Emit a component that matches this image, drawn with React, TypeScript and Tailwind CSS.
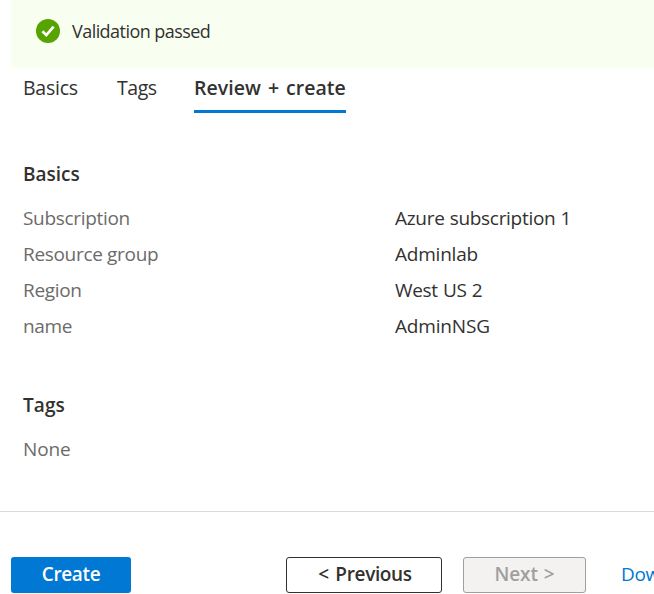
const tabs = [
  { label: 'Basics', style: 'mr-[39px] w-[55px] tracking-[-0.25px]' },
  { label: 'Tags', style: 'mr-[38px] w-[39px] tracking-[-0.45px]' },
];

const details = [
  { label: 'Subscription', value: 'Azure subscription 1', style: 'tracking-[-0.3px] [word-spacing:0.5px]' },
  { label: 'Resource group', value: 'Adminlab', style: 'tracking-[-0.22px]' },
  { label: 'Region', value: 'West US 2', style: 'tracking-[-0.3px] [word-spacing:0.5px]' },
  { label: 'name', value: 'AdminNSG', style: 'tracking-[-0.17px]' },
];

function CheckIcon() {
  return (
    <svg className="h-6 w-6 shrink-0" viewBox="0 0 24 24" fill="none">
      <circle cx="12" cy="12" r="12" fill="#57a300" />
      <path d="M6.4 12.2 10.3 16.1 17.6 7.7" stroke="white" strokeWidth="2.7" />
    </svg>
  );
}

export default function App() {
  return (
    <div className="flex h-[594px] w-[654px] flex-col overflow-hidden bg-white font-['Open_Sans','Noto_Sans',sans-serif] text-[19px] leading-[36px] whitespace-nowrap text-[#323130]">
      <div className="ml-[11px] flex h-[68px] shrink-0 items-start rounded-bl-[2px] bg-[#f8fff0] pt-[19px] pl-[25px]">
        <CheckIcon />
        <p className="ml-3 text-[18px] leading-6 tracking-[-0.55px]">Validation passed</p>
      </div>

      <nav className="flex h-[45px] shrink-0 items-start pl-[23px] text-[19.5px] leading-[40px]">
        {tabs.map((tab) => (
          <button key={tab.label} className={`text-left ${tab.style}`}>{tab.label}</button>
        ))}
        <button className="h-[45px] w-[152px] border-b-3 border-[#0078d4] pb-[2px] text-left font-semibold tracking-[0.05px] [word-spacing:1.8px]">Review + create</button>
      </nav>

      <main className="h-[399px] shrink-0 border-b border-[#dadada] pt-[43px] pl-[23px]">
        <h2 className="font-semibold tracking-[0px]">Basics</h2>
        <dl className="mt-[8px]">
          {details.map((item) => (
            <div key={item.label} className="flex h-9">
              <dt className="w-[372px] tracking-[-0.32px] text-[#6c6b6a]">{item.label}</dt>
              <dd className={item.style}>{item.value}</dd>
            </div>
          ))}
        </dl>
        <h2 className="mt-[43px] font-semibold tracking-[0.1px]">Tags</h2>
        <p className="mt-[8px] tracking-[-0.15px] text-[#6c6b6a]">None</p>
      </main>

      <footer className="flex pt-[45px] pl-[11px] leading-[32px] font-semibold">
        <button className="h-9 w-[120px] shrink-0 rounded-[3px] bg-[#0078d4] pb-[2px] tracking-[-0.35px] text-white">Create</button>
        <button className="ml-[155px] h-9 w-[156px] shrink-0 rounded-[3px] border border-[#323130] pb-[2px] pl-[2px] tracking-[-0.35px] [word-spacing:2px]">&lt; Previous</button>
        <button className="ml-[21px] h-9 w-[123px] shrink-0 rounded-[3px] border border-[#a19f9d] bg-[#f3f2f1] pb-[2px] tracking-[-0.1px] text-[#a19f9d] [word-spacing:1px]">Next &gt;</button>
        <a className="ml-[35px] leading-[34px] font-normal tracking-[-0.35px] text-[#0078d4]">Download a template for automation</a>
      </footer>
    </div>
  );
}
